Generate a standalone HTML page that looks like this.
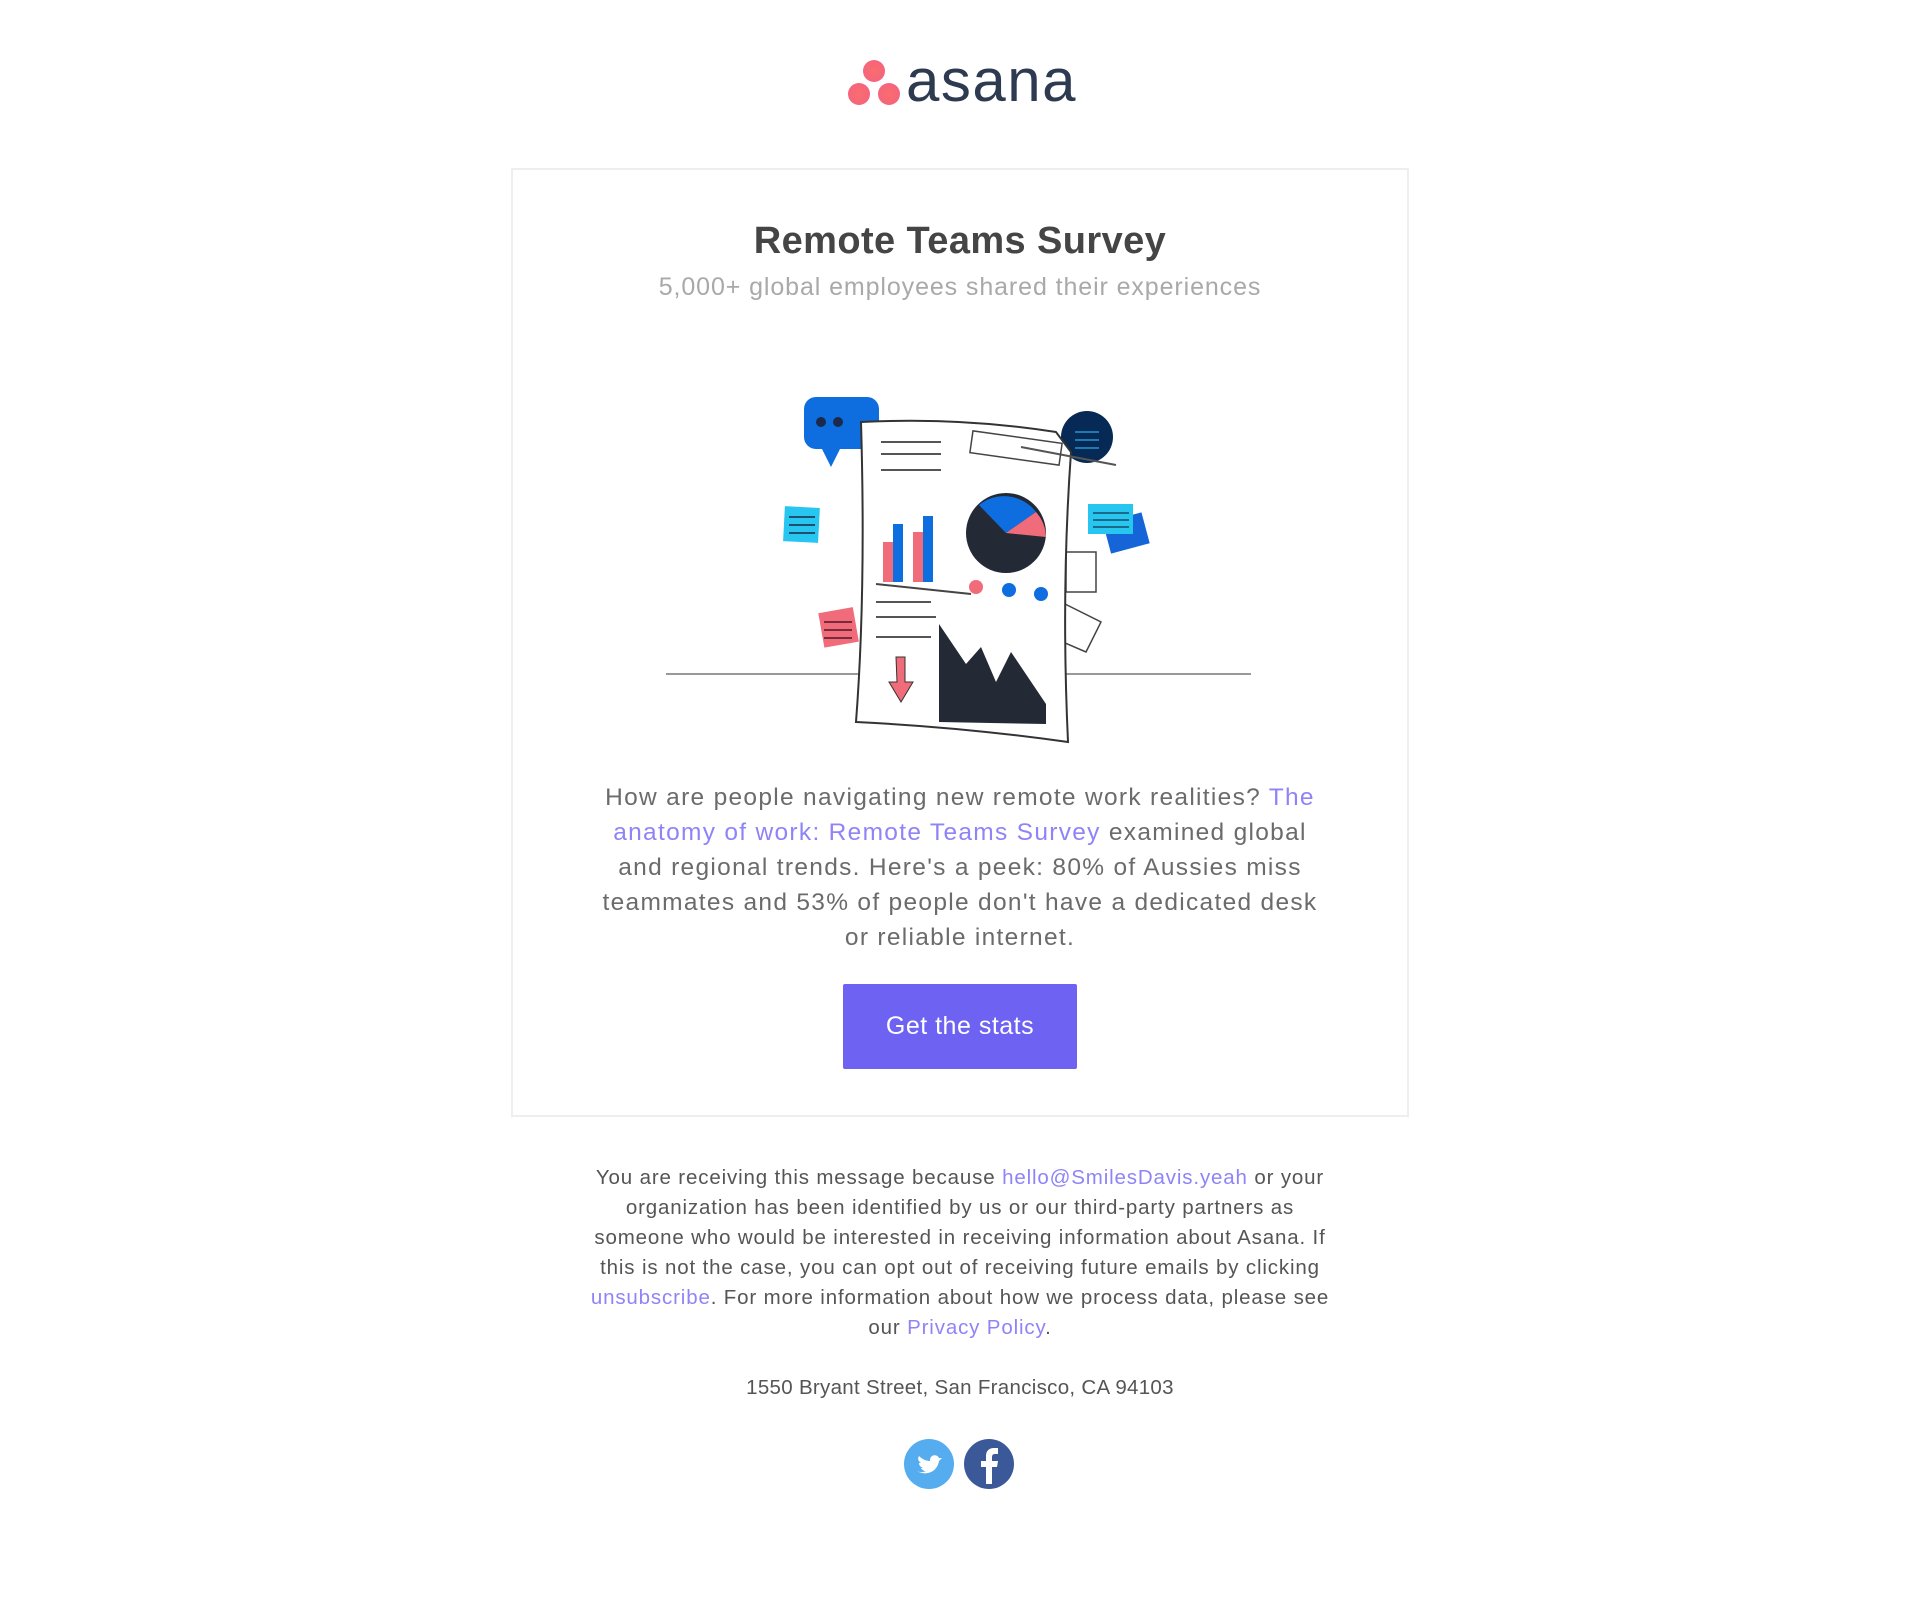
<!DOCTYPE html>
<html><head><meta charset="utf-8"><style>
*{margin:0;padding:0;box-sizing:border-box}
body{width:1920px;height:1599px;background:#fff;font-family:"Liberation Sans",sans-serif;position:relative;overflow:hidden}
.abs{position:absolute}
.c{text-align:center}
a{color:#8e84f7}
</style></head><body>
<svg class="abs" style="left:846px;top:58px" width="56" height="50" viewBox="0 0 56 50">
<defs><radialGradient id="g" cx="50%" cy="50%" r="60%"><stop offset="0" stop-color="#fa6d6d"/><stop offset="1" stop-color="#f4637f"/></radialGradient></defs>
<circle cx="28" cy="13" r="11" fill="url(#g)"/><circle cx="13" cy="36" r="11" fill="url(#g)"/><circle cx="43" cy="36" r="11" fill="url(#g)"/></svg>
<div class="abs" style="left:906px;top:46px;font-size:60px;color:#2d3a50;letter-spacing:1.5px">asana</div>

<div class="abs" style="left:511px;top:168px;width:898px;height:949px;border:2px solid #eeeeee"></div>
<div class="abs c" style="left:511px;top:220px;width:898px;font-size:38px;font-weight:bold;color:#454545;letter-spacing:0.4px">Remote Teams Survey</div>
<div class="abs c" style="left:511px;top:273px;width:898px;font-size:25px;color:#a9a9a9;letter-spacing:0.9px">5,000+ global employees shared their experiences</div>

<svg class="abs" style="left:661px;top:392px" width="590" height="360" viewBox="0 0 590 360">
<line x1="5" y1="282" x2="590" y2="282" stroke="#999" stroke-width="2"/>
<rect x="143" y="5" width="75" height="52" rx="12" fill="#0e6ee0"/>
<path d="M160 55 L170 75 L180 55Z" fill="#0e6ee0"/>
<circle cx="160" cy="30" r="5" fill="#1c2a4a"/><circle cx="177" cy="30" r="5" fill="#1c2a4a"/>
<circle cx="426" cy="45" r="26" fill="#062a55"/>
<path d="M414 40h24M414 48h24M414 56h24" stroke="#1b7ab0" stroke-width="2"/>
<rect x="123" y="115" width="35" height="35" fill="#27c6f0" transform="rotate(3 140 132)"/>
<path d="M128 125h26M128 133h26M128 141h26" stroke="#205070" stroke-width="2"/>
<rect x="445" y="125" width="40" height="32" fill="#1565d8" transform="rotate(-15 465 140)"/>
<rect x="427" y="112" width="45" height="30" fill="#27c6f0"/>
<path d="M432 121h36M432 128h36M432 135h36" stroke="#1c6a8a" stroke-width="2"/>
<rect x="160" y="218" width="35" height="35" fill="#f06c7a" transform="rotate(-10 177 235)"/>
<path d="M163 230h28M163 238h28M163 246h28" stroke="#7a2b3b" stroke-width="2"/>
<path d="M400 210 l40 20 -15 30 -35 -15z" fill="#fff" stroke="#444" stroke-width="1.5"/>
<path d="M405 160h30v40h-30z" fill="#fff" stroke="#444" stroke-width="1.5"/>
<path d="M200 30 Q300 25 395 40 L410 60 Q400 200 407 350 Q300 335 195 330 Q205 200 200 30Z" fill="#fff" stroke="#333" stroke-width="2"/>
<path d="M220 50h60M220 62h60M220 78h60M360 55l95 18" stroke="#555" stroke-width="2"/>
<rect x="310" y="45" width="90" height="22" fill="none" stroke="#444" stroke-width="1.5" transform="rotate(8 355 56)"/>
<rect x="222" y="150" width="12" height="40" fill="#f06c7a"/><rect x="232" y="132" width="10" height="58" fill="#0e6ee0"/>
<rect x="252" y="140" width="12" height="50" fill="#f06c7a"/><rect x="262" y="124" width="10" height="66" fill="#0e6ee0"/>
<path d="M215 192 l95 10" stroke="#444" stroke-width="2"/>
<circle cx="345" cy="141" r="40" fill="#232a36"/>
<path d="M345 141 L318 113 A40 40 0 0 1 375 120Z" fill="#0e6ee0"/>
<path d="M345 141 L375 120 A40 40 0 0 1 385 145Z" fill="#f06c7a"/>
<circle cx="315" cy="195" r="7" fill="#f06c7a"/><circle cx="348" cy="198" r="7" fill="#0e6ee0"/><circle cx="380" cy="202" r="7" fill="#0e6ee0"/>
<path d="M215 210h55M215 225h60M215 245h55" stroke="#555" stroke-width="2"/>
<path d="M278 232 L278 330 L385 332 L385 312 L350 260 L335 290 L320 255 L305 272Z" fill="#232a36"/>
<path d="M235 265 L244 265 L244 290 L252 290 L240 310 L228 290 L236 290Z" fill="#f06c7a" stroke="#333"/>
</svg>

<div class="abs c" style="left:511px;top:780px;width:898px;font-size:24.5px;line-height:35px;color:#6b6b6b;letter-spacing:1.3px">How are people navigating new remote work realities? <a style="text-decoration:none">The<br>anatomy of work: Remote Teams Survey</a> examined global<br>and regional trends. Here's a peek: 80% of Aussies miss<br>teammates and 53% of people don't have a dedicated desk<br>or reliable internet.</div>
<div class="abs c" style="left:843px;top:984px;width:234px;height:85px;background:#6e62f3;border-radius:2px;color:#fff;font-size:25px;line-height:85px;letter-spacing:0.5px">Get the stats</div>

<div class="abs c" style="left:511px;top:1163px;width:898px;font-size:20.5px;line-height:30px;color:#555;letter-spacing:0.85px">You are receiving this message because <a>hello@SmilesDavis.yeah</a> or your<br>organization has been identified by us or our third-party partners as<br>someone who would be interested in receiving information about Asana. If<br>this is not the case, you can opt out of receiving future emails by clicking<br><a>unsubscribe</a>. For more information about how we process data, please see<br>our <a>Privacy Policy</a>.</div>
<div class="abs c" style="left:511px;top:1376px;width:898px;font-size:20.5px;color:#555;letter-spacing:0.3px">1550 Bryant Street, San Francisco, CA 94103</div>

<svg class="abs" style="left:904px;top:1438px" width="112" height="52" viewBox="0 0 112 52">
<circle cx="25" cy="26" r="25" fill="#55acee"/>
<path d="M13 33c8 5 20 2 22-10l3-3-3 0c-1-3-6-4-8-1-1 1-1 3-1 4-5 0-9-3-11-5-2 3 0 6 2 7l-2 0c0 3 2 4 4 5l-2 0c1 2 3 3 5 3-2 1-5 2-9 0z" fill="#fff"/>
<circle cx="85" cy="26" r="25" fill="#3b5998"/>
<path d="M82 46V29h-5v-6h5v-5c0-5 3-8 8-8h4v6h-3c-2 0-3 1-3 3v4h6l-1 6h-5v17z" fill="#fff"/>
</svg>
</body></html>
